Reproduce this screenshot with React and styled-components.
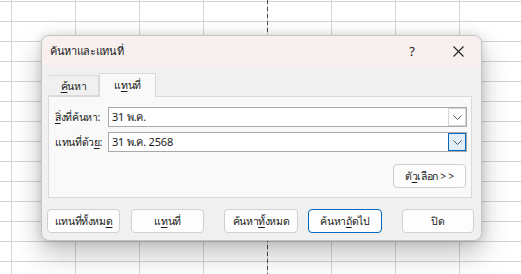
import React from "react";
import styled, { createGlobalStyle } from "styled-components";

const GlobalStyle = createGlobalStyle`
  html, body { margin: 0; padding: 0; height: 100%; }
  body {
    font-family: "Noto Sans", "DejaVu Sans", sans-serif;
    background-color: #ffffff;
    background-image:
      linear-gradient(to bottom, #4a4a4a 4px, transparent 4px),
      linear-gradient(to right, #d4d4d4 1px, transparent 1px),
      linear-gradient(to bottom, #d4d4d4 1px, transparent 1px);
    background-size: 1px 7px, 64px 20px, 64px 20px;
    background-position: 267px 0, 11px 0, 0 1px;
    background-repeat: repeat-y, repeat, repeat;
    overflow: hidden;
  }
`;

const Page = styled.div`
  padding: 35px 0 0 41px;
`;

const Dialog = styled.div`
  box-sizing: border-box;
  width: 441px;
  height: 206px;
  background: #f0f0f0;
  border: 1px solid #c4c4c4;
  border-radius: 8px;
  overflow: hidden;
  box-shadow: 0 12px 28px rgba(0, 0, 0, 0.26), 0 0 10px rgba(0, 0, 0, 0.12);
  display: flex;
  flex-direction: column;
  font-size: 10.5px;
  letter-spacing: -0.35px;
  color: #1a1a1a;
`;

const TitleBar = styled.div`
  height: 30px;
  flex: none;
  background: #f8f0ef;
  display: flex;
  align-items: center;
  padding-left: 8px;
`;

const Title = styled.div`
  flex: 1;
  font-size: 11px;
  color: #1a1a1a;
`;

const TitleButton = styled.div`
  width: 46px;
  height: 30px;
  display: flex;
  align-items: center;
  justify-content: center;
  font-size: 13px;
  letter-spacing: 0;
  color: #222;
`;

const Body = styled.div`
  padding: 7px 0 0 6px;
  display: flex;
  flex-direction: column;
`;

const Tabs = styled.div`
  display: flex;
  align-items: flex-end;
  margin-left: 1px;
  height: 23px;
`;

const Tab = styled.div`
  box-sizing: border-box;
  width: ${(p) => p.$w}px;
  height: ${(p) => (p.$active ? 24 : 21)}px;
  margin-bottom: ${(p) => (p.$active ? -1 : 0)}px;
  background: ${(p) => (p.$active ? "#f9f9f9" : "#f0f0f0")};
  border: 1px solid #dadada;
  border-bottom: ${(p) => (p.$active ? "none" : "1px solid #dadada")};
  border-left: ${(p) => (p.$active ? "1px solid #dadada" : "none")};
  position: relative;
  z-index: ${(p) => (p.$active ? 1 : 0)};
  display: flex;
  align-items: center;
  justify-content: center;
  padding-top: ${(p) => (p.$active ? 0 : 1)}px;
`;

const Panel = styled.div`
  box-sizing: border-box;
  width: 424px;
  height: 102px;
  background: #f9f9f9;
  border: 1px solid #dadada;
  padding: 10px 4px 0 6px;
  display: flex;
  flex-direction: column;
`;

const FieldGrid = styled.div`
  display: grid;
  grid-template-columns: 53px 359px;
  row-gap: 5px;
  align-items: center;
`;

const Label = styled.div`
  white-space: nowrap;
`;

const Combo = styled.div`
  box-sizing: border-box;
  height: 20px;
  background: #ffffff;
  border: 1px solid #a9a9a9;
  display: flex;
  align-items: stretch;
`;

const ComboText = styled.div`
  flex: 1;
  display: flex;
  align-items: center;
  padding-left: 3px;
  font-size: 11px;
  letter-spacing: -0.2px;
`;

const DropButton = styled.div`
  box-sizing: border-box;
  width: 18px;
  border: 1px solid ${(p) => (p.$focus ? "#0067c0" : "#d6d6d6")};
  background: ${(p) => (p.$focus ? "#e1eefa" : "#ffffff")};
  display: flex;
  align-items: center;
  justify-content: center;
`;

const OptionsRow = styled.div`
  display: flex;
  justify-content: flex-end;
  margin-top: 12px;
  padding-right: 1px;
`;

const Button = styled.div`
  box-sizing: border-box;
  width: ${(p) => p.$w || 73}px;
  height: 24px;
  margin-left: ${(p) => p.$ml || 0}px;
  background: #fdfdfd;
  border: 1px solid ${(p) => (p.$default ? "#0067c0" : "#d0d0d0")};
  border-radius: 4px;
  display: flex;
  align-items: center;
  justify-content: center;
  white-space: nowrap;
  padding-top: 1px;
`;

const ButtonRow = styled.div`
  display: flex;
  margin-top: 11px;
  margin-left: -1px;
`;

const U = styled.span`
  text-decoration: underline;
  text-underline-offset: 2px;
`;

const Chevron = () => (
  <svg width="9" height="5" viewBox="0 0 9 5">
    <path d="M0.5 0.5 L4.5 4.5 L8.5 0.5" fill="none" stroke="#555" strokeWidth="1" />
  </svg>
);

const CloseIcon = () => (
  <svg width="11" height="11" viewBox="0 0 11 11">
    <path d="M0.5 0.5 L10.5 10.5 M10.5 0.5 L0.5 10.5" stroke="#222" strokeWidth="1.1" fill="none" />
  </svg>
);

export default function App() {
  return (
    <>
      <GlobalStyle />
      <Page>
        <Dialog>
          <TitleBar>
            <Title>ค้นหาและแทนที่</Title>
            <TitleButton>?</TitleButton>
            <TitleButton>
              <CloseIcon />
            </TitleButton>
          </TitleBar>
          <Body>
            <Tabs>
              <Tab $w={50}>
                <span><U>ค้</U>นหา</span>
              </Tab>
              <Tab $w={57} $active>
                <span>แ<U>ท</U>นที่</span>
              </Tab>
            </Tabs>
            <Panel>
              <FieldGrid>
                <Label><U>สิ่</U>งที่ค้นหา:</Label>
                <Combo>
                  <ComboText>31 พ.ค.</ComboText>
                  <DropButton><Chevron /></DropButton>
                </Combo>
                <Label>แทนที่ด้ว<U>ย</U>:</Label>
                <Combo>
                  <ComboText>31 พ.ค. 2568</ComboText>
                  <DropButton $focus><Chevron /></DropButton>
                </Combo>
              </FieldGrid>
              <OptionsRow>
                <Button>ตั<U>ว</U>เลือก &gt; &gt;</Button>
              </OptionsRow>
            </Panel>
            <ButtonRow>
              <Button>แทนที่ทั้งหม<U>ด</U></Button>
              <Button $ml={11}>แ<U>ท</U>นที่</Button>
              <Button $ml={20} $w={74}>ค้นหา<U>ทั้</U>งหมด</Button>
              <Button $ml={10} $w={74} $default>ค้นหา<U>ถั</U>ดไป</Button>
              <Button $ml={20} $w={72}>ปิด</Button>
            </ButtonRow>
          </Body>
        </Dialog>
      </Page>
    </>
  );
}
